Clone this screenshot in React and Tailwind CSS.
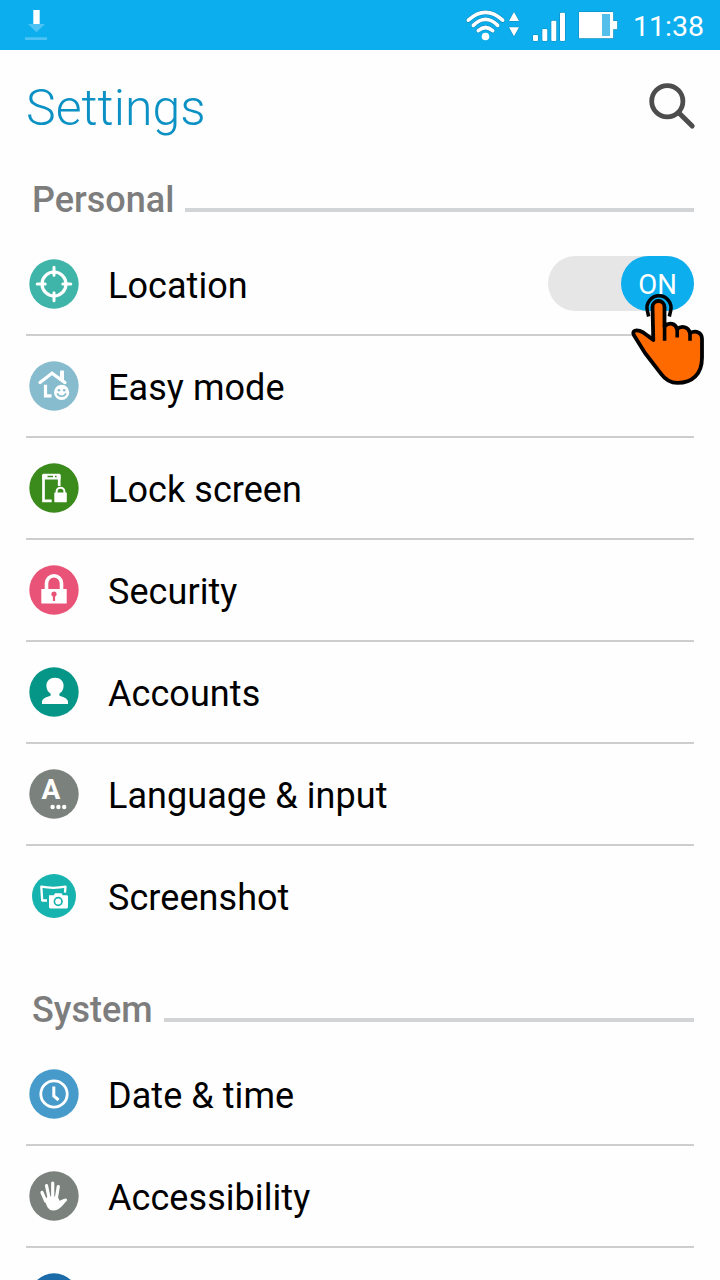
import { useState } from 'react'

const LocationIcon = () => (
  <g fill="none" stroke="#fff" strokeLinecap="round">
    <circle cx="25" cy="25" r="12" strokeWidth="3.2" />
    <path d="M25 8.2v8M25 33.8v8M8.2 25h8M33.8 25h8" strokeWidth="3" />
  </g>
)

const EasyModeIcon = () => (
  <g>
    <path d="M11 21.6 23 12.3 36 21.6" fill="none" stroke="#fff" strokeWidth="3.2" strokeLinecap="round" />
    <path d="M31 10.2q0-.8.8-.8h2.4q.8 0 .8.8v9l-4-2.8z" fill="#fff" />
    <path d="M16.5 23.8v11h6" fill="none" stroke="#fff" strokeWidth="3.2" />
    <circle cx="32.6" cy="31.4" r="7.6" fill="#fff" />
    <circle cx="30" cy="29.2" r="1.3" fill="#86bcce" />
    <circle cx="35.2" cy="29.2" r="1.3" fill="#86bcce" />
    <path d="M28.2 32.3c1.4 4 7.4 4 8.8 0" fill="none" stroke="#86bcce" strokeWidth="1.6" />
  </g>
)

const LockScreenIcon = () => (
  <g>
    <path d="M22.7 37.9h-8.2V13.4h15.7V23" fill="none" stroke="#fff" strokeWidth="2.7" />
    <path d="M13.2 12.2q0-1.4 1.4-1.4h15.5q1.4 0 1.4 1.4v4.3H13.200z" fill="#fff" />
    <path d="M18.5 13.5H24M26 13.5h1.6" stroke="#3a8a1c" strokeWidth="1.5" />
    <path d="M27.6 30v-1.7a3.9 3.6 0 0 1 7.8 0V30" fill="none" stroke="#fff" strokeWidth="2" />
    <rect x="25.3" y="29.6" width="12.5" height="9.6" rx=".6" fill="#fff" />
  </g>
)

const SecurityIcon = () => (
  <g>
    <path d="M17.5 25v-6.5a7.5 7.7 0 0 1 15 0V25" fill="none" stroke="#fff" strokeWidth="3.6" />
    <rect x="12.3" y="24" width="25.4" height="14.6" rx=".6" fill="#fff" />
    <circle cx="25" cy="29" r="2.6" fill="#ea5378" />
    <path d="M25 29v7" stroke="#ea5378" strokeWidth="2.2" />
  </g>
)

const AccountsIcon = () => (
  <path
    d="M26 10.800c5.200 0 8.600 3.400 8.600 8 0 3.600-1.700 6.400-4.200 7.700v2.200c3.800 1 8.600 2.600 8.600 6.400v2H13v-2c0-3.800 4.800-5.400 8.600-6.400v-2.200c-2.500-1.300-4.200-4.100-4.200-7.700 0-4.600 3.400-8 8.600-8z"
    fill="#fff"
  />
)

const LanguageIcon = () => (
  <g fill="#fff">
    <text x="22" y="30" textAnchor="middle" fontSize="28" fontWeight="700" fontFamily="Roboto, sans-serif">A</text>
    <circle cx="23.6" cy="38" r="2.2" />
    <circle cx="29.4" cy="38" r="2.2" />
    <circle cx="35.2" cy="38" r="2.2" />
  </g>
)

const ScreenshotIcon = () => (
  <g>
    <path d="M18 29.5h-4.8L12.3 15.7q12 2.2 24.2 0l-.5 6" fill="none" stroke="#fff" strokeWidth="2.3" strokeLinejoin="round" />
    <path d="M20 24.2h4.8l1.2-2h6.5l1.2 2h4q1.3 0 1.3 1.3v10.6q0 1.3-1.3 1.3H21.300q-1.300 0-1.300-1.300z" fill="#fff" />
    <circle cx="29.2" cy="30.5" r="3.8" fill="none" stroke="#17b3ae" strokeWidth="1.7" />
  </g>
)

const ClockIcon = () => (
  <g fill="none" stroke="#fff">
    <circle cx="25" cy="25" r="13.2" strokeWidth="2.8" />
    <path d="M24.8 17.5V27l4.800 4" strokeWidth="3" />
  </g>
)

const HandIcon = () => (
  <g stroke="#fff" strokeLinecap="round" strokeLinejoin="round" fill="#fff">
    <path d="M13 21.5l3.700 8.500M17.500 14.500l2.700 13M23.700 12v15M29.300 15.500l-2 12" strokeWidth="3.2" />
    <path d="M16.5 28.500l3-2h8.500l2.200 4.500c2.200-.6 4-2.400 6.400-2.500 1.800.2-.6 1.600-1.600 2.800-3 3.400-5 7.400-11 7.400-4.500 0-5.500-4.200-7.500-10.200z" strokeWidth="1.8" />
  </g>
)

const personal = [
  { label: 'Location', color: '#3fb5aa', icon: LocationIcon, toggle: true },
  { label: 'Easy mode', color: '#86bcce', icon: EasyModeIcon },
  { label: 'Lock screen', color: '#3a8a1c', icon: LockScreenIcon },
  { label: 'Security', color: '#ea5378', icon: SecurityIcon },
  { label: 'Accounts', color: '#069688', icon: AccountsIcon },
  { label: 'Language & input', color: '#7b827d', icon: LanguageIcon },
  { label: 'Screenshot', color: '#17b3ae', icon: ScreenshotIcon, radius: 22 },
]

const system = [
  { label: 'Date & time', color: '#479bca', icon: ClockIcon },
  { label: 'Accessibility', color: '#7b827d', icon: HandIcon },
  { label: '', color: '#1a6ba8' },
]

const StatusBar = () => (
  <div className="flex h-[50px] items-center justify-between bg-[#0caeee] pl-6 pr-4">
    <svg width="24" height="50" viewBox="24 0 24 50">
      <path d="M28 24h17l-8.500 8.300zM25 37.300h22V40H25z" fill="#4cc3f4" />
      <path d="M33.300 10h6.400v14h-6.400z" fill="#fff" />
    </svg>
    <div className="flex h-full items-center">
      <svg width="156" height="50" viewBox="464 0 156 50">
        <g stroke="#0a85b8" strokeWidth="1" paintOrder="stroke" fill="#fff">
          <path d="M509 21l5-9 5 9zM509 27.300h10l-5 9z" />
          <rect x="533" y="35" width="5" height="6" rx="1" />
          <rect x="542.3" y="29" width="5" height="12" rx="1" />
          <rect x="551.3" y="20.7" width="5" height="20.3" rx="1" />
          <rect x="560" y="12.7" width="5" height="28.3" rx="1" />
          <path d="M579 12h34.200v9h4v8.300h-4v9H579z" />
        </g>
        <rect x="602" y="14" width="8" height="22" fill="#55bfec" />
        <g fill="none" strokeLinecap="round">
          <g stroke="#0a85b8" strokeWidth="4.6">
            <path d="M468.300 20.200q17.200-15.600 34.400 0M473.300 25.400q12.200-12 24.400 0M478.300 30.700q7.200-6.400 14.400 0" />
          </g>
          <g stroke="#fff" strokeWidth="3.6">
            <path d="M468.300 20.200q17.200-15.600 34.400 0M473.300 25.400q12.200-12 24.400 0M478.300 30.700q7.200-6.400 14.400 0" />
          </g>
        </g>
        <circle cx="485.5" cy="36.5" r="3.8" fill="#fff" />
      </svg>
      <span className="ml-[13px] w-[71px] whitespace-nowrap pt-[5px] text-[28.5px] leading-none text-white">11:38</span>
    </div>
  </div>
)

const Pointer = () => (
  <svg className="pointer-events-none absolute left-[82px] top-9 z-10" width="76" height="96" viewBox="0 0 76 96">
    <path d="M18.7 24.500 17.300 18.500a12 12 0 1 1 23.400 0L39.300 24.500" fill="none" stroke="#000" strokeWidth="3.5" />
    <path
      d="M23.300 48 22.500 15a6 6 0 0 1 12 0v19.500c5-5 11-3 12.500 2.500 5-4 11.500-2 13 4 6-3 12-.5 12 6v18.500C72 82 62.500 90.900 47.300 90.900c-7 0-12-3.200-16-8.700L15 61 3.800 43c-2-4 2-6.500 9.500-2.500z"
      fill="#ff6a00"
      stroke="#000"
      strokeWidth="3.8"
      strokeLinejoin="round"
    />
    <path d="M34.600 33v15.800M47.200 36v9.500M60 40v8.800" stroke="#000" strokeWidth="3.6" />
  </svg>
)

const Toggle = ({ on, onChange }) => (
  <div className="relative mb-0.5">
    <button
      onClick={onChange}
      className={`flex h-[55px] w-[146px] rounded-full bg-[#e6e6e6] ${on ? 'justify-end' : 'justify-start'}`}
    >
      <span className="flex h-full w-[73px] items-center justify-center rounded-full bg-[#0caeee] pt-[4px] text-[27.5px] text-white">
        {on ? 'ON' : 'OFF'}
      </span>
    </button>
    <Pointer />
  </div>
)

const SectionTitle = ({ children }) => (
  <div className="flex h-[74px] pl-[6px]">
    <h2 className="mt-[19px] text-[36px] font-medium leading-[42px] text-[#7d7d7d]">{children}</h2>
    <div className="ml-[11px] mt-12 h-1 flex-1 bg-[#d3d4d5]" />
  </div>
)

const Row = ({ item, last, on, onChange }) => {
  const Icon = item.icon
  return (
    <div className={`flex h-[102px] items-center border-b-2 pl-[3px] ${last ? 'border-transparent' : 'border-[#cecece]'}`}>
      <svg width="50" height="50" viewBox="0 0 50 50">
        <circle cx="25" cy="25" r={item.radius || 24.7} fill={item.color} />
        {Icon && <Icon />}
      </svg>
      <span className="ml-[29px] flex-1 pt-1 text-[36px] leading-[42px] tracking-[0.06px] text-black">{item.label}</span>
      {item.toggle && <Toggle on={on} onChange={onChange} />}
    </div>
  )
}

const App = () => {
  const [locationOn, setLocationOn] = useState(true)

  return (
    <div className="h-[1280px] w-[720px] overflow-hidden bg-[#fefefe] font-[Roboto,sans-serif]">
      <StatusBar />
      <header className="flex h-[110px] items-center justify-between pl-[26px] pr-6">
        <h1 className="pt-[6px] text-[50px] font-light leading-none text-[#0b91c4]">Settings</h1>
        <svg className="mt-0.5" width="48" height="48" viewBox="648 82 48 48" fill="none" stroke="#4d4d4d">
          <circle cx="667.3" cy="101.2" r="15.6" strokeWidth="4.8" />
          <path d="M679 113l13.200 13" strokeWidth="5" strokeLinecap="round" />
        </svg>
      </header>

      <main className="px-[26px]">
        <SectionTitle>Personal</SectionTitle>
        {personal.map((item, i) => (
          <Row
            key={item.label}
            item={item}
            last={i === personal.length - 1}
            on={locationOn}
            onChange={() => setLocationOn(!locationOn)}
          />
        ))}
        <div className="h-[22px]" />
        <SectionTitle>System</SectionTitle>
        {system.map((item) => (
          <Row key={item.color} item={item} />
        ))}
      </main>
    </div>
  )
}

export default App
